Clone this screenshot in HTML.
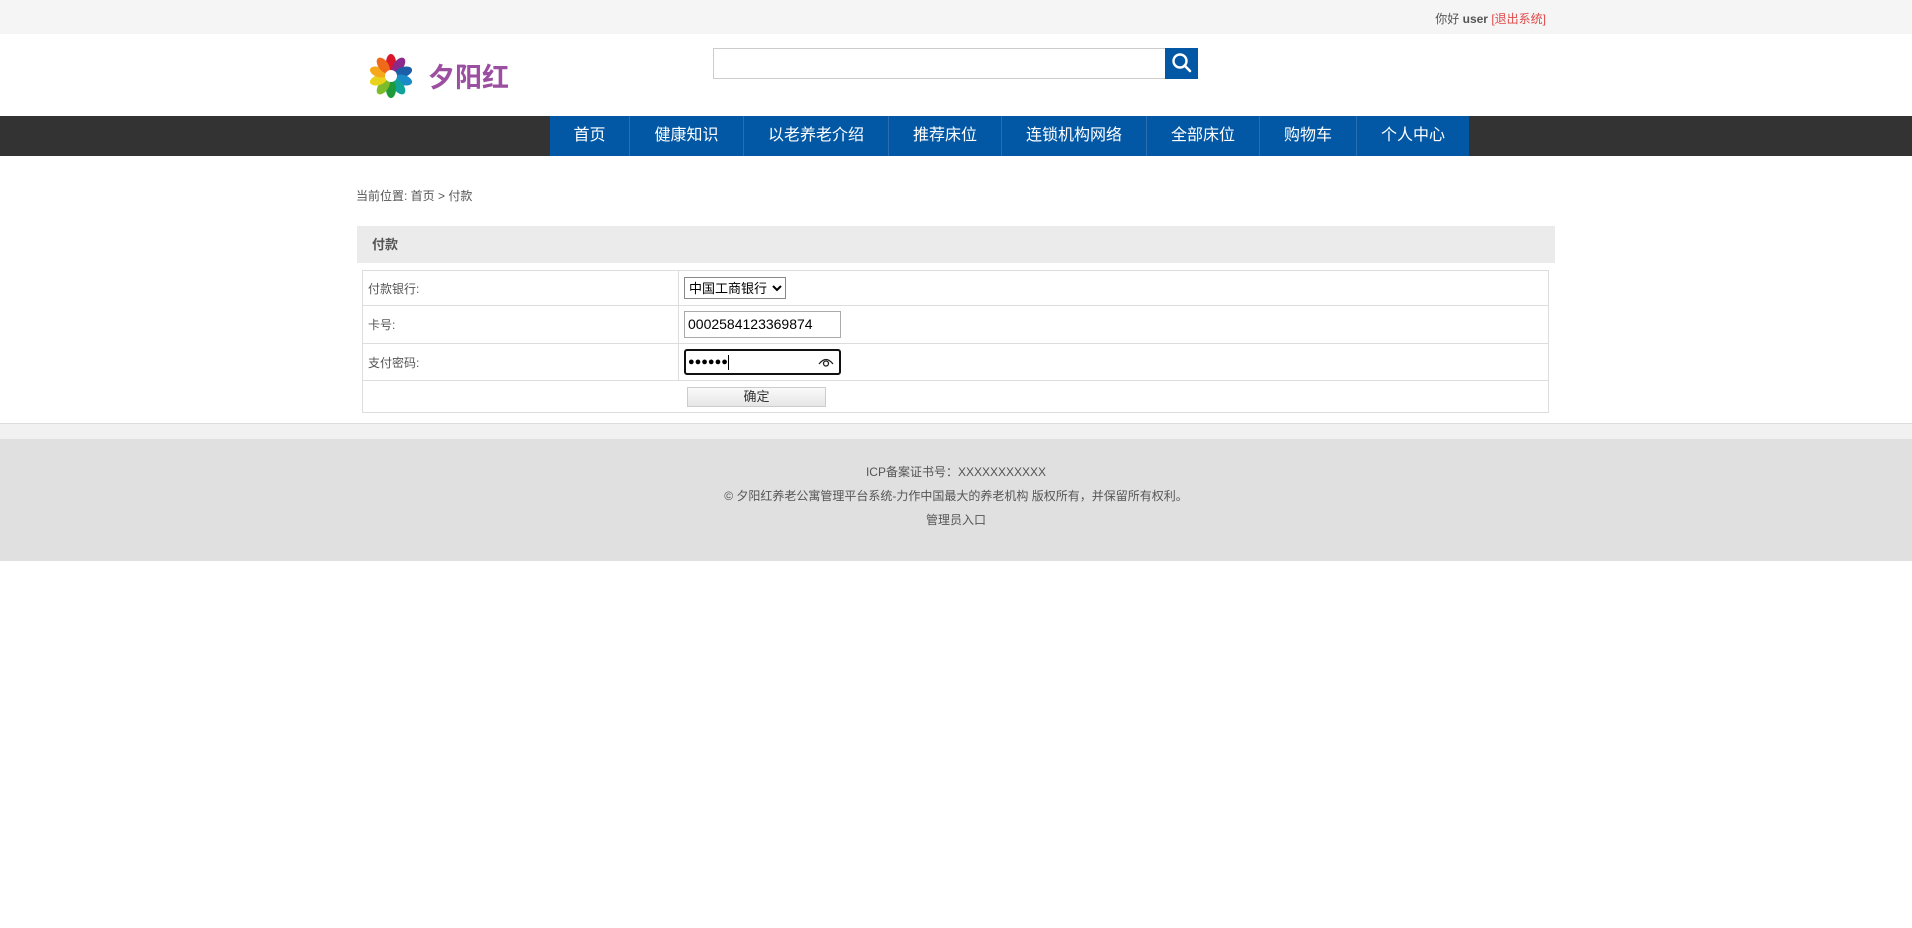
<!DOCTYPE html>
<html><head><meta charset="utf-8">
<style>
*{margin:0;padding:0;box-sizing:border-box}
body{width:1912px;height:928px;background:#fff;position:relative;overflow:hidden;font-family:"Liberation Sans","Noto Sans CJK SC",sans-serif;color:#555}
.a{position:absolute}
#top{left:0;top:0;width:1912px;height:34px;background:#f5f5f5}
#nav{left:0;top:116px;width:1912px;height:40px;background:#333}
.ni{position:absolute;top:116px;height:40px;background:#0358a5;color:#fff;font-size:16px;line-height:40px;text-align:center;border-right:1px solid #2a6db0}
td{border:1px solid #ddd;font-size:12px;color:#555;padding-left:5px}
</style></head><body>
<div class="a" id="top"></div>
<div class="a" style="right:366px;top:10px;font-size:12px;color:#555">你好 <b>user</b> <span style="color:#e04848">[退出系统]</span></div>

<svg class="a" style="left:368px;top:53px" width="46" height="46" viewBox="-23 -23 46 46">
<g>
<ellipse cx="0" cy="-13" rx="5" ry="9" fill="#d8172a"/>
<ellipse cx="0" cy="-13" rx="5" ry="9" fill="#8b2a8a" transform="rotate(36)"/>
<ellipse cx="0" cy="-13" rx="5" ry="9" fill="#1d5ea8" transform="rotate(72)"/>
<ellipse cx="0" cy="-13" rx="5" ry="9" fill="#1b8ac8" transform="rotate(108)"/>
<ellipse cx="0" cy="-13" rx="5" ry="9" fill="#11a39a" transform="rotate(144)"/>
<ellipse cx="0" cy="-13" rx="5" ry="9" fill="#1f9a3a" transform="rotate(180)"/>
<ellipse cx="0" cy="-13" rx="5" ry="9" fill="#7cbb2a" transform="rotate(216)"/>
<ellipse cx="0" cy="-13" rx="5" ry="9" fill="#e8d21a" transform="rotate(252)"/>
<ellipse cx="0" cy="-13" rx="5" ry="9" fill="#f5a91a" transform="rotate(288)"/>
<ellipse cx="0" cy="-13" rx="5" ry="9" fill="#ee6a1a" transform="rotate(324)"/>
<circle r="6" fill="#fff"/>
</g></svg>
<div class="a" style="left:428px;top:61px;font-size:27px;font-weight:bold;color:#9b4fa0;line-height:34px">夕阳红</div>

<div class="a" style="left:713px;top:48px;width:453px;height:31px;border:1px solid #ccc;background:#fff"></div>
<div class="a" style="left:1165px;top:48px;width:33px;height:31px;background:#0358a5">
<svg width="33" height="31" viewBox="0 0 33 31"><circle cx="15" cy="13" r="6.5" fill="none" stroke="#fff" stroke-width="2.4"/><line x1="19.5" y1="17.5" x2="25" y2="23" stroke="#fff" stroke-width="2.6" stroke-linecap="round"/></svg>
</div>

<div class="a" id="nav"></div>
<div class="ni" style="left:550px;width:80px">首页</div>
<div class="ni" style="left:630px;width:114px">健康知识</div>
<div class="ni" style="left:744px;width:145px">以老养老介绍</div>
<div class="ni" style="left:889px;width:113px">推荐床位</div>
<div class="ni" style="left:1002px;width:145px">连锁机构网络</div>
<div class="ni" style="left:1147px;width:113px">全部床位</div>
<div class="ni" style="left:1260px;width:97px">购物车</div>
<div class="ni" style="left:1357px;width:112px;border-right:none">个人中心</div>

<div class="a" style="left:356px;top:187px;font-size:12px;color:#555">当前位置: 首页 &gt; 付款</div>
<div class="a" style="left:357px;top:226px;width:1198px;height:37px;background:#ebebeb;font-size:13px;font-weight:bold;color:#555;line-height:37px;padding-left:15px">付款</div>

<table class="a" style="left:362px;top:270px;width:1187px;border-collapse:collapse">
<tr style="height:35px"><td style="width:316px">付款银行:</td><td><select style="font-size:13px;height:22px;width:102px;border:1px solid #888;font-family:inherit;color:#000;background:#fff"><option>中国工商银行</option></select></td></tr>
<tr style="height:38px"><td>卡号:</td><td><div style="width:157px;height:27px;border:1px solid #aaa;font-size:14px;color:#000;line-height:25px;padding-left:3px">0002584123369874</div></td></tr>
<tr style="height:37px"><td>支付密码:</td><td><div style="width:157px;height:26px;border:2px solid #111;border-radius:3px;font-size:11px;color:#000;line-height:22px;padding-left:2px;position:relative">●●●●●●<span style="display:inline-block;width:1px;height:15px;background:#000;vertical-align:middle"></span>
<svg style="position:absolute;right:5px;top:5px" width="16" height="12" viewBox="0 0 16 12"><path d="M1 8 Q8 -1 15 8" fill="none" stroke="#222" stroke-width="1.3"/><circle cx="8" cy="7.5" r="2.5" fill="none" stroke="#222" stroke-width="1.3"/></svg></div></td></tr>
<tr style="height:32px"><td colspan="2"></td></tr>
</table>
<div class="a" style="left:687px;top:387px;width:139px;height:20px;border:1px solid #ccc;background:linear-gradient(#fafafa,#e6e6e6);font-size:13px;color:#333;text-align:center;line-height:18px">确定</div>

<div class="a" style="left:0;top:423px;width:1912px;height:16px;background:#f1f1f1;border-top:1px solid #ddd"></div>
<div class="a" style="left:0;top:439px;width:1912px;height:122px;background:#e0e0e0;text-align:center;font-size:12px;color:#555">
<div style="margin-top:21px;line-height:24px">ICP备案证书号：XXXXXXXXXXX</div>
<div style="line-height:24px">© 夕阳红养老公寓管理平台系统-力作中国最大的养老机构 版权所有，并保留所有权利。</div>
<div style="line-height:24px">管理员入口</div>
</div>
</body></html>
